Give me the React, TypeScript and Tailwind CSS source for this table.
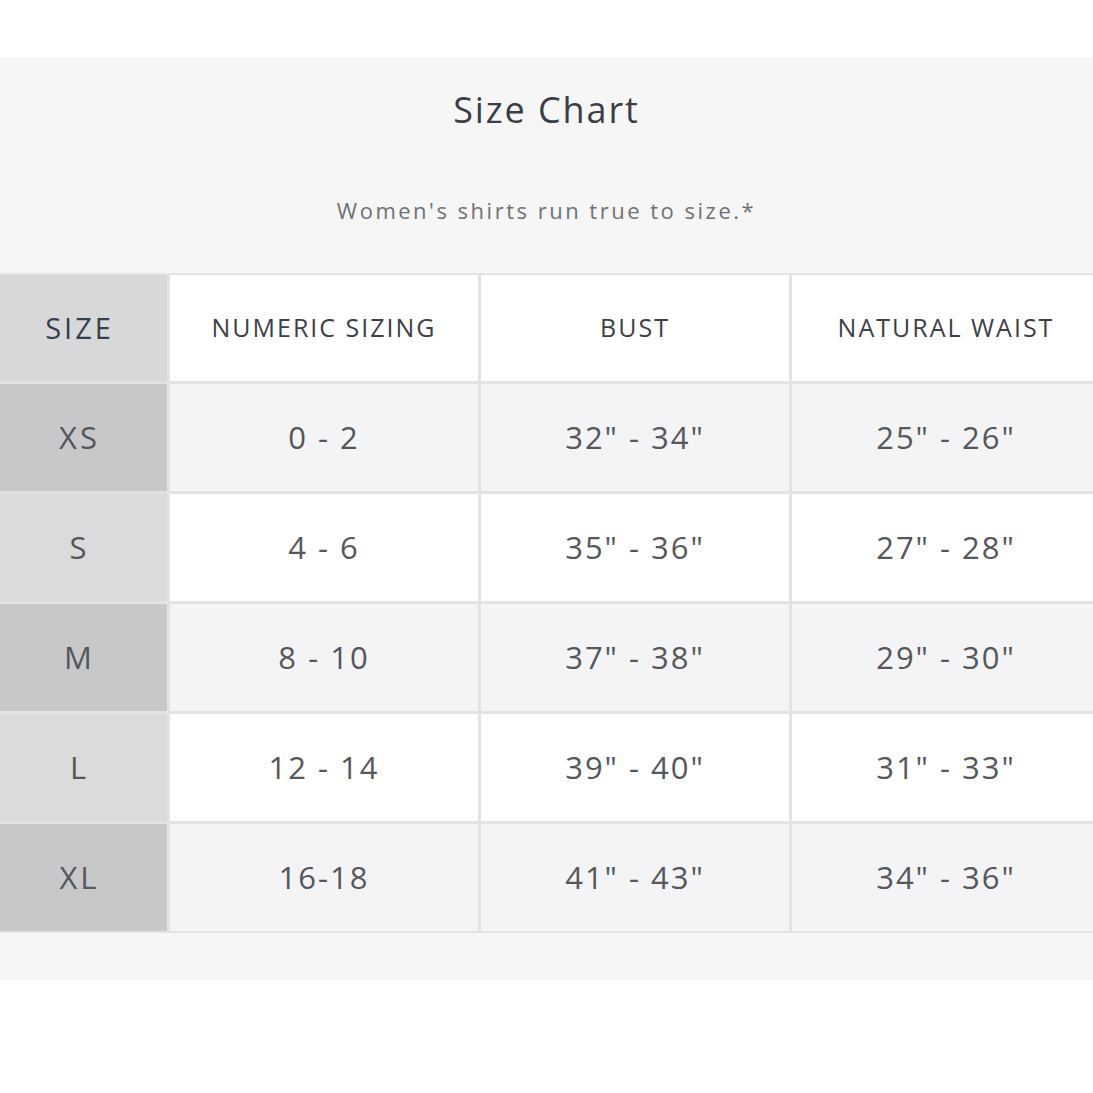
import React from "react";

const rows = [
  { size: "XS", num: "0 - 2", bust: '32" - 34"', waist: '25" - 26"', dark: true },
  { size: "S", num: "4 - 6", bust: '35" - 36"', waist: '27" - 28"', dark: false },
  { size: "M", num: "8 - 10", bust: '37" - 38"', waist: '29" - 30"', dark: true },
  { size: "L", num: "12 - 14", bust: '39" - 40"', waist: '31" - 33"', dark: false },
  { size: "XL", num: "16-18", bust: '41" - 43"', waist: '34" - 36"', dark: true },
];

export default function App() {
  return (
    <div className="w-[1093px] h-[1093px] bg-white overflow-hidden" style={{ fontFamily: "'Open Sans', Lato, sans-serif" }}>
      <div className="mt-[57px] bg-[#f6f6f7] pb-[47px]">
        <div className="h-[216px] flex flex-col items-center">
          <div className="mt-[30px] text-[36px] leading-[46px] text-[#3b3e46] tracking-[1.9px]">Size Chart</div>
          <div className="mt-[62px] text-[22px] leading-[30px] text-[#707173] tracking-[2.5px]">Women's shirts run true to size.*</div>
        </div>
        <div className="bg-[#e3e3e6] pt-[2px] pb-[2px] grid grid-cols-[167px_308px_308px_1fr] gap-[3px] w-[1100px]">
          <div className="h-[106px] bg-[#d8d8da] flex items-center justify-center pr-[8px] text-[29px] text-[#373e50] tracking-[3px]">SIZE</div>
          <div className="h-[106px] bg-white flex items-center justify-center text-[25px] text-[#3e4046] tracking-[2px]">NUMERIC SIZING</div>
          <div className="h-[106px] bg-white flex items-center justify-center text-[25px] text-[#3e4046] tracking-[2px]">BUST</div>
          <div className="h-[106px] bg-white flex items-center justify-center text-[25px] text-[#3e4046] tracking-[2px]">NATURAL WAIST</div>
          {rows.map((r) => (
            <React.Fragment key={r.size}>
              <div className={`h-[107px] flex items-center justify-center pr-[8px] text-[31px] text-[#55575b] tracking-[3px] ${r.dark ? "bg-[#c8c8ca]" : "bg-[#dbdbdd]"}`}>{r.size}</div>
              <div className={`h-[107px] flex items-center justify-center text-[31px] text-[#55575b] tracking-[2px] ${r.dark ? "bg-[#f4f4f6]" : "bg-white"}`}>{r.num}</div>
              <div className={`h-[107px] flex items-center justify-center text-[31px] text-[#55575b] tracking-[2px] ${r.dark ? "bg-[#f4f4f6]" : "bg-white"}`}>{r.bust}</div>
              <div className={`h-[107px] flex items-center justify-center text-[31px] text-[#55575b] tracking-[2px] ${r.dark ? "bg-[#f4f4f6]" : "bg-white"}`}>{r.waist}</div>
            </React.Fragment>
          ))}
        </div>
      </div>
    </div>
  );
}
